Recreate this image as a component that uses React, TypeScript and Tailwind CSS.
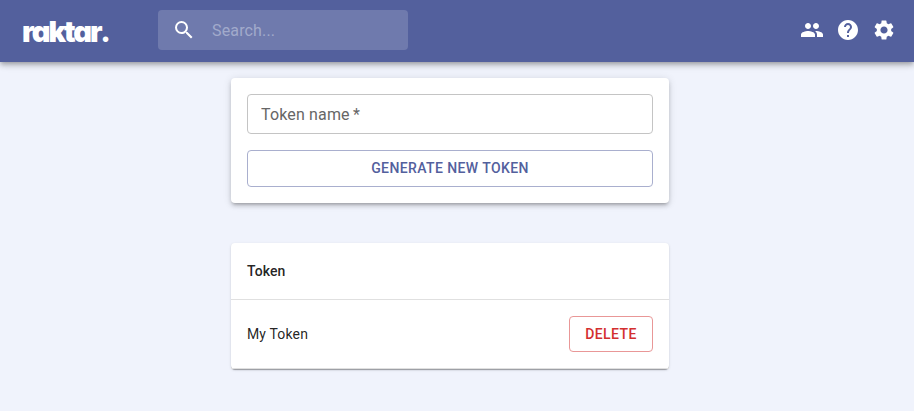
import type { ReactNode } from "react";
import { MdHelp, MdPeople, MdSearch, MdSettings } from "react-icons/md";

function Header() {
  return (
    <header className="relative z-10 flex h-[62px] items-center bg-[#53609d] pr-[18px] pl-[22px] text-white shadow-[0px_2px_4px_-1px_rgba(0,0,0,0.2),0px_4px_5px_0px_rgba(0,0,0,0.14),0px_1px_10px_0px_rgba(0,0,0,0.12)]">
      <div className="flex w-[136px] shrink-0 items-baseline pb-[5px] font-['Inter',sans-serif] text-[29px] leading-none font-black tracking-[-2px] [font-feature-settings:'cv11']">
        <span>raktar</span>
        <span className="ml-px font-['Lato',sans-serif] text-[34px] leading-none font-black">.</span>
      </div>
      <label className="mb-[2px] flex h-10 w-[250px] items-center rounded bg-[#6f7aad] pl-[14px]">
        <MdSearch size={24} className="shrink-0" />
        <input
          type="text"
          placeholder="Search..."
          className="ml-4 w-[180px] bg-transparent pt-[2px] text-base tracking-[0.15px] outline-none placeholder:text-[#a2aacb]"
        />
      </label>
      <nav className="mb-[2px] ml-auto flex items-center gap-3">
        <MdPeople size={24} />
        <MdHelp size={24} />
        <MdSettings size={24} />
      </nav>
    </header>
  );
}

function Card({ className, children }: { className: string; children: ReactNode }) {
  return <section className={`w-[438px] rounded bg-white ${className}`}>{children}</section>;
}

export default function App() {
  return (
    <div className="h-[411px] overflow-hidden bg-[#f0f3fc] font-['Roboto',sans-serif] text-[rgba(0,0,0,0.87)]">
      <Header />
      <main className="flex flex-col items-center gap-10 pt-4 pr-[14px]">
        <Card className="flex flex-col gap-4 p-4 shadow-[0px_3px_3px_-2px_rgba(0,0,0,0.2),0px_3px_4px_0px_rgba(0,0,0,0.14),0px_1px_8px_0px_rgba(0,0,0,0.12)]">
          <input
            type="text"
            placeholder={"Token name\u2009*"}
            className="h-10 rounded border border-[#c4c4c4] px-[13px] text-base tracking-[0.15px] outline-none placeholder:text-[#666666]"
          />
          <button className="h-[37px] rounded border border-[#a9afce] pb-px text-sm font-medium tracking-[0.4px] text-[#53609d]">
            GENERATE NEW TOKEN
          </button>
        </Card>
        <Card className="shadow-[0px_2px_1px_-1px_rgba(0,0,0,0.2),0px_1px_1px_0px_rgba(0,0,0,0.14),0px_1px_3px_0px_rgba(0,0,0,0.12)]">
          <div className="flex h-[57px] items-center border-b border-[#e0e0e0] px-4 text-sm font-medium tracking-[0.1px]">
            Token
          </div>
          <div className="flex h-[69px] items-center justify-between border-b border-[#e0e0e0] px-4 text-sm tracking-[0.15px]">
            <span>My Token</span>
            <button className="h-9 w-[84px] rounded border border-[#e99797] font-medium tracking-[0.4px] text-[#d32f2f]">
              DELETE
            </button>
          </div>
        </Card>
      </main>
    </div>
  );
}
